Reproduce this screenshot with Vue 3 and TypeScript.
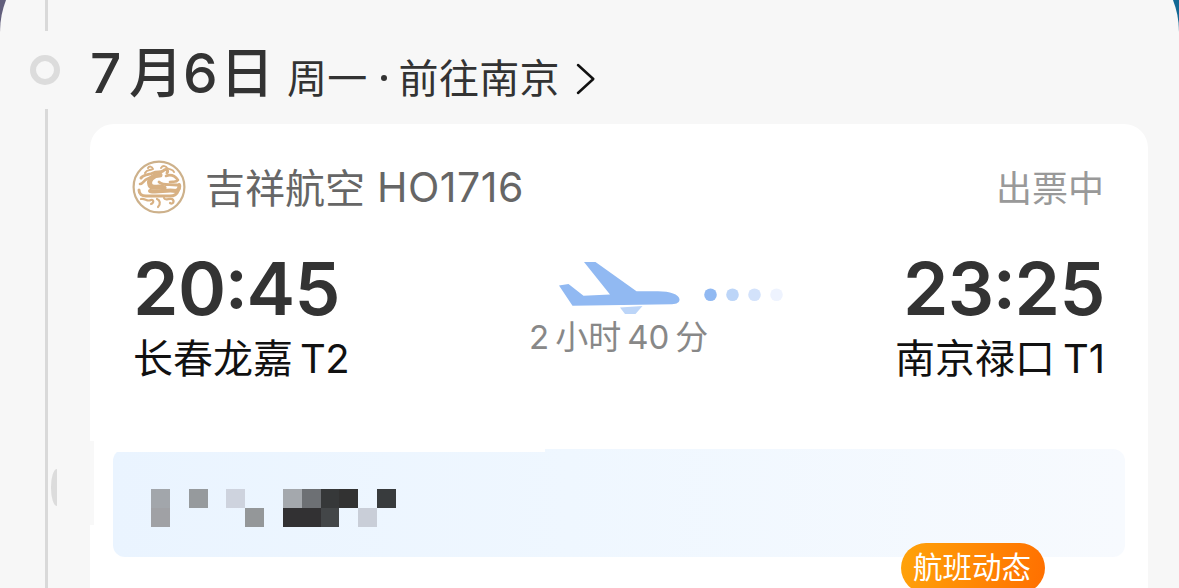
<script setup lang="ts">
interface Stop {
  hour: string
  minute: string
  airport: string
  terminal: string
}

const from: Stop = { hour: '20', minute: '45', airport: '长春龙嘉', terminal: 'T2' }
const to: Stop = { hour: '23', minute: '25', airport: '南京禄口', terminal: 'T1' }

// 打码色块，空字符串表示透明
const mosaic: string[][] = [
  ['#a2a6ab', '', '#969a9d', '', '#ced3de', '', '', '#a4a8ad', '#6d7074', '#363839', '#323232', '', '#383b3d'],
  ['#a0a1a5', '', '', '', '', '#949799', '', '#323133', '#323133', '#434648', '', '#c9ced8', '']
]
</script>

<template>
  <div class="page">
    <div class="sheet">
      <!-- 左侧时间轴 -->
      <div class="rail">
        <div class="line line-top"></div>
        <div class="ring"></div>
        <div class="line line-rest"></div>
        <div class="half-dot"></div>
      </div>

      <div class="main">
        <div class="title">
          <span class="num seven">7</span><span class="han">月</span><span class="num six">6</span><span class="han">日</span>
          <span class="sub">周一</span><i class="dot"></i><span class="sub">前往南京</span>
          <svg class="arrow" width="20" height="32" viewBox="0 0 20 32">
            <path d="M2 2L17.3 16L2 30" fill="none" stroke="#111" stroke-width="2.5" stroke-linecap="round" stroke-linejoin="round" />
          </svg>
        </div>

        <div class="card">
          <div class="notch"></div>
          <div class="airline">
            <svg class="logo" width="54" height="54" viewBox="0 0 54 54" fill="none" stroke="#d8b183" stroke-linecap="round" stroke-linejoin="round">
              <circle cx="27" cy="27" r="25.4" stroke="#cdb18b" stroke-width="2.200" />
              <path d="M9 18C12 14 17 15 21 13C25 11 28 13 31 11C34 8 37 10 35 13" stroke-width="3" />
              <path d="M13 13C15 9 18 11 21 9C20 6 17 6 16 8M29 8C31 5 34 6 35 8C38 10 41 9 42 12" stroke-width="2" />
              <path d="M8 24C11 24 12 20 15 19C18 17 21 17 23 15" stroke-width="2.600" />
              <path d="M28 15C21 15 16 20 18 25C20 30 27 25 32 28" stroke-width="5" />
              <path d="M34 16C39 14 43 16 46 20C44 23 41 21 38 22" stroke-width="2.600" />
              <path d="M27 22C31 26 36 24 45 25" stroke-width="2.800" />
              <path d="M18 31C26 33 35 29 44 31C47 30 48 27 47 25" stroke-width="4" />
              <path d="M7 30C7 34 10 36 14 36H38C42 36 45 34 46 31" stroke-width="3" />
              <path d="M9 39C13 38 15 42 19 40C22 39 22 43 19 44M25 39C28 40 29 44 26 47M32 38C33 41 37 38 40 39C43 41 41 45 38 43" stroke-width="2.200" />
            </svg>
            <span class="name">吉祥航空</span>
            <span class="flight-no">HO1716</span>
            <span class="status">出票中</span>
          </div>

          <div class="route">
            <div class="stop">
              <div class="time">{{ from.hour }}<span class="colon">:</span>{{ from.minute }}</div>
              <div class="place">{{ from.airport }}<span class="terminal">{{ from.terminal }}</span></div>
            </div>
            <div class="middle">
              <svg class="plane" width="226" height="56" viewBox="0 0 226 56">
                <path d="M25 4H36.500L77.500 33.300H99C111 33.300 120 36.500 120.500 41.300C120.500 44.600 118 46 113 46.200L13.500 47.700L0 27.500L9.500 26L24.500 37.800L51 36.500Z" fill="#91b9f2" />
                <path d="M61 49.600L83.500 48L76.500 56H66Z" fill="#bcd5f8" />
                <circle cx="151.500" cy="36.800" r="6.300" fill="#91b9f2" />
                <circle cx="173.500" cy="36.800" r="6.300" fill="#bcd5f8" />
                <circle cx="195.500" cy="36.800" r="6.300" fill="#d3e2fb" />
                <circle cx="217.500" cy="36.800" r="6.300" fill="#eef3fe" />
              </svg>
              <div class="duration">
                <span>2</span><span class="unit">小时</span><span class="minutes">40</span><span>分</span>
              </div>
            </div>
            <div class="stop stop-right">
              <div class="time">{{ to.hour }}<span class="colon">:</span>{{ to.minute }}</div>
              <div class="place">{{ to.airport }}<span class="terminal">{{ to.terminal }}</span></div>
            </div>
          </div>

          <div class="banner">
            <div class="mosaic">
              <template v-for="(row, r) in mosaic" :key="r">
                <i v-for="(color, c) in row" :key="c" :style="{ background: color || 'transparent' }"></i>
              </template>
            </div>
            <div class="badge">航班动态</div>
          </div>
        </div>
      </div>
    </div>
  </div>
</template>

<style>
body {
  margin: 0;
  overflow: hidden;
}
</style>

<style scoped>
.page {
  width: 1179px;
  height: 588px;
  overflow: hidden;
  background: linear-gradient(90deg, #625f7c 0 50%, #126894 50%);
  font-family: Inter, "Noto Sans CJK SC", sans-serif;
  color: #333;
}

.sheet {
  display: flex;
  box-sizing: border-box;
  height: 644px;
  margin-top: -56px;
  padding-top: 56px;
  border-radius: 88px 88px 0 0;
  background: #f7f7f7;
}

.rail {
  position: relative;
  display: flex;
  flex-direction: column;
  align-items: center;
  width: 90px;
  flex-shrink: 0;
}

.line {
  width: 3px;
  margin-left: 3px;
  background: #d9d9d9;
}

.line-top {
  height: 31px;
}

.line-rest {
  flex: 1;
}

.ring {
  box-sizing: border-box;
  width: 30px;
  height: 30px;
  margin: 24px 0;
  border: 6px solid #dcdcdc;
  border-radius: 50%;
}

.half-dot {
  position: absolute;
  left: 51px;
  top: 469px;
  width: 6px;
  height: 37px;
  border-radius: 6px 0 0 6px / 18px 0 0 18px;
  background: #dcdcdc;
}

.main {
  width: 1058px;
}

.title {
  display: flex;
  align-items: baseline;
  height: 124px;
  line-height: 146px;
  white-space: nowrap;
}

.num {
  font-size: 55px;
  font-weight: 500;
}

.seven {
  width: 39px;
}

.six {
  width: 37px;
  margin-left: -2px;
}

.han {
  width: 56px;
  font-size: 54px;
  font-weight: 500;
  line-height: 140px;
}

.sub {
  font-size: 40px;
  font-weight: 400;
  letter-spacing: 0.3px;
}

.han + .sub {
  margin-left: 11px;
}

.dot {
  width: 6px;
  height: 6px;
  margin: 0 12px 0 13px;
  border-radius: 50%;
  background: #333;
  transform: translateY(-12px);
}

.arrow {
  align-self: flex-start;
  margin: 63px 0 0 16px;
}

.card {
  position: relative;
  height: 464px;
  border-radius: 24px 24px 0 0;
  background: #fff;
}

.notch {
  position: absolute;
  left: 0;
  top: 317px;
  width: 4px;
  height: 84px;
  background: #f8f8f8;
}

.airline {
  display: flex;
  align-items: center;
  height: 126px;
  padding: 0 44px 0 42px;
  font-size: 40px;
  color: #666;
}

.name {
  margin: -2px 0 0 19px;
}

.flight-no {
  margin-left: 12px;
  font-size: 41px;
  letter-spacing: 0.5px;
}

.status {
  margin: -3px 0 0 auto;
  font-size: 36px;
  font-weight: 400;
  color: #999;
}

.route {
  display: flex;
  height: 199px;
  padding: 0 43px;
}

.stop {
  width: 396px;
}

.stop-right {
  width: 320px;
  text-align: right;
}

.time {
  height: 78px;
  font-size: 73px;
  font-weight: 600;
  line-height: 78px;
  letter-spacing: -0.5px;
}

/* 冒号相对数字垂直居中 */
.colon {
  position: relative;
  top: -7px;
  margin: 0 -1px;
}

.place {
  height: 60px;
  font-size: 40px;
  line-height: 62px;
  color: #111;
}

.terminal {
  margin-left: 7px;
  letter-spacing: -0.5px;
}

.stop-right .terminal {
  margin-left: 8px;
  letter-spacing: 0;
}

.middle {
  width: 256px;
}

.plane {
  display: block;
  margin: 8px 0 0 30px;
}

.duration {
  display: flex;
  height: 48px;
  font-size: 33px;
  line-height: 46px;
  color: #888;
}

.unit {
  margin: 0 6px;
}

.minutes {
  margin-right: 6px;
}

.banner {
  position: relative;
  width: 1012px;
  height: 108px;
  margin-left: 23px;
  border-radius: 12px;
  background: linear-gradient(90deg, #eaf4ff, #eff7ff 45%, #f7fafe);
}

/* 左半部分上沿比右半部分低 3px */
.banner::before {
  content: "";
  position: absolute;
  left: 0;
  top: 0;
  width: 432px;
  height: 3px;
  background: #fff;
}

.mosaic {
  display: grid;
  grid-template-columns: repeat(13, 18.85px);
  grid-auto-rows: 19px;
  padding: 40px 0 0 38px;
}

.badge {
  position: absolute;
  left: 788px;
  top: 94px;
  width: 142px;
  height: 50px;
  padding-right: 2px;
  border-radius: 25px;
  background: linear-gradient(100deg, #ffa30a, #ff6f00);
  font-size: 29.500px;
  line-height: 49px;
  text-align: center;
  color: #fff;
}
</style>
